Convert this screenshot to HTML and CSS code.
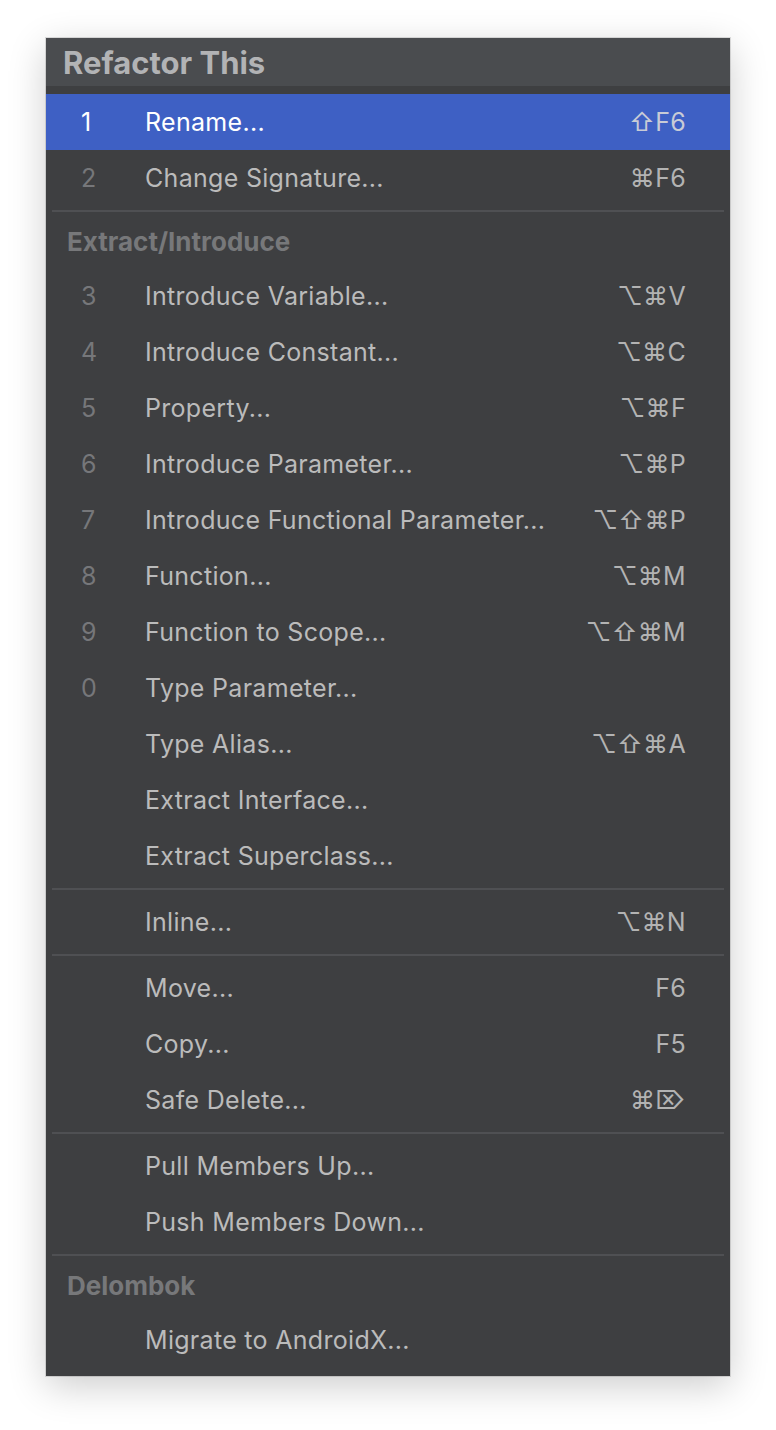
FILE: index.html
```html
<!DOCTYPE html>
<html>
<head>
<meta charset="utf-8">
<link rel="stylesheet" href="styles.css">
</head>
<body>
<div class="popup">
  <div class="title">Refactor This</div>
  <div class="list">
    <div class="row selected"><span class="num">1</span><span class="label">Rename...</span><span class="key">⇧F6</span></div>
    <div class="row"><span class="num">2</span><span class="label">Change Signature...</span><span class="key">⌘F6</span></div>
    <div class="sep"></div>
    <div class="group">Extract/Introduce</div>
    <div class="row"><span class="num">3</span><span class="label">Introduce Variable...</span><span class="key">⌥⌘V</span></div>
    <div class="row"><span class="num">4</span><span class="label">Introduce Constant...</span><span class="key">⌥⌘C</span></div>
    <div class="row"><span class="num">5</span><span class="label">Property...</span><span class="key">⌥⌘F</span></div>
    <div class="row"><span class="num">6</span><span class="label">Introduce Parameter...</span><span class="key">⌥⌘P</span></div>
    <div class="row"><span class="num">7</span><span class="label">Introduce Functional Parameter...</span><span class="key">⌥⇧⌘P</span></div>
    <div class="row"><span class="num">8</span><span class="label">Function...</span><span class="key">⌥⌘M</span></div>
    <div class="row"><span class="num">9</span><span class="label">Function to Scope...</span><span class="key">⌥⇧⌘M</span></div>
    <div class="row"><span class="num">0</span><span class="label">Type Parameter...</span><span class="key"></span></div>
    <div class="row"><span class="num"></span><span class="label">Type Alias...</span><span class="key">⌥⇧⌘A</span></div>
    <div class="row"><span class="num"></span><span class="label">Extract Interface...</span><span class="key"></span></div>
    <div class="row"><span class="num"></span><span class="label">Extract Superclass...</span><span class="key"></span></div>
    <div class="sep"></div>
    <div class="row"><span class="num"></span><span class="label">Inline...</span><span class="key">⌥⌘N</span></div>
    <div class="sep"></div>
    <div class="row"><span class="num"></span><span class="label">Move...</span><span class="key">F6</span></div>
    <div class="row"><span class="num"></span><span class="label">Copy...</span><span class="key">F5</span></div>
    <div class="row"><span class="num"></span><span class="label">Safe Delete...</span><span class="key">⌘⌦</span></div>
    <div class="sep"></div>
    <div class="row"><span class="num"></span><span class="label">Pull Members Up...</span><span class="key"></span></div>
    <div class="row"><span class="num"></span><span class="label">Push Members Down...</span><span class="key"></span></div>
    <div class="sep"></div>
    <div class="group">Delombok</div>
    <div class="row"><span class="num"></span><span class="label">Migrate to AndroidX...</span><span class="key"></span></div>
  </div>
</div>
</body>
</html>
```

FILE: styles.css
```css
html, body {
  margin: 0;
  padding: 0;
  background: #ffffff;
}
body {
  min-height: 1430px;
  box-sizing: border-box;
  padding: 38px 0 0 46px;
  font-family: "Inter", "DejaVu Sans", sans-serif;
}
.popup {
  width: 684px;
  height: 1338px;
  box-sizing: border-box;
  background: #3e3f41;
  box-shadow: 0 0 0 1px rgba(0,0,0,0.12), 0 10px 36px rgba(0,0,0,0.2);
  display: flex;
  flex-direction: column;
}
.title {
  height: 48px;
  background: #4a4c4f;
  color: #b2b3b5;
  font-weight: 700;
  font-size: 31px;
  line-height: 50px;
  padding-left: 17px;
}
.list {
  padding-top: 8px;
  display: flex;
  flex-direction: column;
}
.row {
  height: 56px;
  display: flex;
  align-items: center;
  font-size: 25px;
  letter-spacing: 0.3px;
  color: #bbbbbb;
}
.row.selected {
  background: #3e60c4;
  color: #ffffff;
}
.num {
  width: 99px;
  box-sizing: border-box;
  padding-left: 35px;
  color: #76777a;
}
.selected .num { color: #ffffff; }
.label {
  flex: 1;
}
.key {
  padding-right: 44px;
  color: #b3b3b3;
}
.selected .key { color: #c8cbd6; }
.sep {
  height: 10px;
  display: flex;
  align-items: center;
  padding: 0 6px;
}
.sep::before {
  content: "";
  flex: 1;
  height: 2px;
  background: #4f5053;
}
.group {
  height: 52px;
  line-height: 52px;
  padding-left: 21px;
  font-size: 26px;
  font-weight: 700;
  color: #77787a;
}
```
